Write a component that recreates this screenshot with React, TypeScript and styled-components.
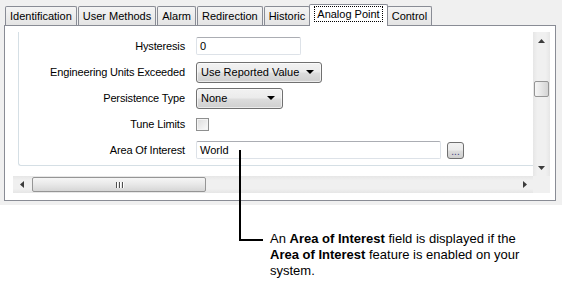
import React from "react";
import styled, { createGlobalStyle } from "styled-components";

const GlobalStyle = createGlobalStyle`
  html, body {
    margin: 0;
    padding: 0;
    background: #ffffff;
  }
  body {
    font-family: "Liberation Sans", Arial, sans-serif;
    color: #000000;
  }
`;

const TABS = ["Identification", "User Methods", "Alarm", "Redirection", "Historic", "Analog Point", "Control"];
const ACTIVE_TAB = "Analog Point";

const Page = styled.div`
  position: relative;
  width: 562px;
  height: 300px;
  overflow: hidden;
`;

const Window = styled.div`
  background: #f0f0f0;
  padding: 3px 6px 4px 4px;
`;

const TabStrip = styled.div`
  position: relative;
  z-index: 1;
  display: flex;
  align-items: flex-end;
  height: 23px;
  margin-bottom: -1px;
  padding-left: 1px;
`;

const Tab = styled.div<{ $active?: boolean }>`
  position: relative;
  box-sizing: border-box;
  display: flex;
  align-items: center;
  height: ${({ $active }) => ($active ? "22px" : "19px")};
  margin: ${({ $active }) => ($active ? "0 -1px 0 -2px" : "0 1px 1px 0")};
  padding: ${({ $active }) => ($active ? "0 5px 3px" : "0 4px")};
  border: 1px solid #898c95;
  border-bottom: none;
  border-radius: 2px 2px 0 0;
  background: ${({ $active }) => ($active ? "#ffffff" : "linear-gradient(#f4f4f4, #e4e4e4)")};
  z-index: ${({ $active }) => ($active ? 2 : 0)};
  font-size: 11px;
  white-space: nowrap;
`;

const FocusLabel = styled.span`
  padding: 1px 2px;
  outline: 1px dotted #000000;
  outline-offset: 0;
`;

const Panel = styled.div`
  box-sizing: border-box;
  height: 176px;
  border: 1px solid #898c95;
  background: #ffffff;
  padding: 6px 5px 7px 8px;
`;

const ScrollFrame = styled.div`
  display: grid;
  grid-template-columns: 1fr 17px;
  grid-template-rows: 1fr 17px;
  height: 100%;
`;

const Viewport = styled.div`
  overflow: hidden;
  padding: 0 0 9px 5px;
  background: #ffffff;
`;

const GroupBox = styled.div`
  box-sizing: border-box;
  width: 620px;
  height: 134px;
  padding: 1px 0 2px;
  border-left: 1px solid #d5dfe5;
  border-bottom: 1px solid #d5dfe5;
  border-bottom-left-radius: 3px;
  display: grid;
  grid-template-columns: 166px 1fr;
  grid-auto-rows: 26px;
  column-gap: 11px;
  align-items: center;
`;

const Label = styled.div`
  text-align: right;
  font-size: 11px;
  letter-spacing: -0.15px;
  white-space: nowrap;
`;

const FieldRow = styled.div`
  display: flex;
  align-items: center;
  gap: 6px;
`;

const TextBox = styled.div<{ $width: number }>`
  box-sizing: border-box;
  width: ${({ $width }) => $width}px;
  height: 18px;
  padding: 0 3px;
  border: 1px solid #dde2e8;
  border-top-color: #abadb3;
  border-radius: 2px;
  background: #ffffff;
  font-size: 11px;
  line-height: 16px;
`;

const Combo = styled.div<{ $width: number; $height: number }>`
  position: relative;
  box-sizing: border-box;
  width: ${({ $width }) => $width}px;
  height: ${({ $height }) => $height}px;
  padding: 0 20px 0 4px;
  border: 1px solid #707070;
  border-radius: 3px;
  background: linear-gradient(#f2f2f2 0%, #ebebeb 48%, #dddddd 52%, #cfcfcf 100%);
  box-shadow: inset 0 0 0 1px rgba(255, 255, 255, 0.6);
  display: flex;
  align-items: center;
  font-size: 11px;
`;

const ComboArrow = styled.span`
  position: absolute;
  right: 7px;
  top: 50%;
  margin-top: -2px;
  width: 0;
  height: 0;
  border-left: 4px solid transparent;
  border-right: 4px solid transparent;
  border-top: 4px solid #000000;
`;

const CheckBox = styled.div`
  box-sizing: border-box;
  width: 13px;
  height: 13px;
  border: 1px solid #8e8f8f;
  background: linear-gradient(135deg, #dcdcdc, #fbfbfb);
  box-shadow: inset 0 0 0 1px #f4f4f4;
`;

const EllipsisButton = styled.div`
  box-sizing: border-box;
  width: 17px;
  height: 17px;
  margin-top: 1px;
  border: 1px solid #707070;
  border-radius: 3px;
  background: linear-gradient(#f2f2f2 0%, #ebebeb 48%, #dddddd 52%, #cfcfcf 100%);
  display: flex;
  align-items: flex-end;
  justify-content: center;
  font-size: 10px;
  line-height: 12px;
  color: #3a3a7a;
`;

const VScroll = styled.div`
  display: flex;
  flex-direction: column;
  background: linear-gradient(to right, #e6e6e6, #f0f0f0 25%, #f0f0f0 75%, #e6e6e6);
`;

const HScroll = styled.div`
  display: flex;
  align-items: center;
  background: linear-gradient(#e6e6e6, #f0f0f0 25%, #f0f0f0 75%, #e6e6e6);
`;

const Corner = styled.div`
  background: #f0f0f0;
`;

const ArrowButton = styled.div`
  flex: none;
  width: 17px;
  height: 17px;
  display: flex;
  align-items: center;
  justify-content: center;
`;

const Track = styled.div`
  flex: 1;
  display: flex;
  min-width: 0;
  min-height: 0;
`;

const VThumb = styled.div<{ $offset: number }>`
  box-sizing: border-box;
  width: 15px;
  height: 16px;
  margin: ${({ $offset }) => $offset}px 1px 0;
  border: 1px solid #959595;
  border-radius: 2px;
  background: linear-gradient(to right, #f6f6f6, #e6e6e6 50%, #d4d4d4);
`;

const HThumb = styled.div<{ $offset: number; $length: number }>`
  box-sizing: border-box;
  width: ${({ $length }) => $length}px;
  height: 15px;
  margin-left: ${({ $offset }) => $offset}px;
  border: 1px solid #959595;
  border-radius: 2px;
  background: linear-gradient(#f6f6f6, #e8e8e8 50%, #d6d6d6);
  display: flex;
  align-items: center;
  justify-content: center;
  gap: 2px;
`;

const Grip = styled.span`
  width: 1px;
  height: 6px;
  background: #505050;
  box-shadow: 1px 0 0 #ffffff;
`;

const Callout = styled.p`
  margin: 26px 0 0 270px;
  font-size: 13px;
  line-height: 16px;
`;

const Leader = styled.svg`
  position: absolute;
  left: 238px;
  top: 150px;
  pointer-events: none;
`;

function Arrow({ dir }: { dir: "up" | "down" | "left" | "right" }) {
  const points = {
    up: "0,4 3.5,0 7,4",
    down: "0,0 7,0 3.5,4",
    left: "4,0 4,7 0,3.5",
    right: "0,0 0,7 4,3.5",
  }[dir];
  const horizontal = dir === "left" || dir === "right";
  return (
    <svg width={horizontal ? 4 : 7} height={horizontal ? 7 : 4} viewBox={horizontal ? "0 0 4 7" : "0 0 7 4"}>
      <polygon points={points} fill="#3c3c3c" />
    </svg>
  );
}

function App() {
  return (
    <Page>
      <GlobalStyle />
      <Window>
        <TabStrip>
          {TABS.map((t) =>
            t === ACTIVE_TAB ? (
              <Tab key={t} $active>
                <FocusLabel>{t}</FocusLabel>
              </Tab>
            ) : (
              <Tab key={t}>{t}</Tab>
            )
          )}
        </TabStrip>
        <Panel>
          <ScrollFrame>
            <Viewport>
              <GroupBox>
                <Label>Hysteresis</Label>
                <FieldRow>
                  <TextBox $width={105}>0</TextBox>
                </FieldRow>

                <Label>Engineering Units Exceeded</Label>
                <FieldRow>
                  <Combo $width={126} $height={21}>
                    Use Reported Value
                    <ComboArrow />
                  </Combo>
                </FieldRow>

                <Label>Persistence Type</Label>
                <FieldRow>
                  <Combo $width={87} $height={21}>
                    None
                    <ComboArrow />
                  </Combo>
                </FieldRow>

                <Label>Tune Limits</Label>
                <FieldRow>
                  <CheckBox />
                </FieldRow>

                <Label>Area Of Interest</Label>
                <FieldRow>
                  <TextBox $width={245}>World</TextBox>
                  <EllipsisButton>...</EllipsisButton>
                </FieldRow>
              </GroupBox>
            </Viewport>
            <VScroll>
              <ArrowButton>
                <Arrow dir="up" />
              </ArrowButton>
              <Track>
                <VThumb $offset={32} />
              </Track>
              <ArrowButton>
                <Arrow dir="down" />
              </ArrowButton>
            </VScroll>
            <HScroll>
              <ArrowButton>
                <Arrow dir="left" />
              </ArrowButton>
              <Track>
                <HThumb $offset={2} $length={174}>
                  <Grip />
                  <Grip />
                  <Grip />
                </HThumb>
              </Track>
              <ArrowButton>
                <Arrow dir="right" />
              </ArrowButton>
            </HScroll>
            <Corner />
          </ScrollFrame>
        </Panel>
      </Window>
      <Callout>
        An <b>Area of Interest</b> field is displayed if the
        <br />
        <b>Area of Interest</b> feature is enabled on your
        <br />
        system.
      </Callout>
      <Leader width={26} height={92} viewBox="0 0 26 92">
        <polyline points="2,0 2,90 25,90" fill="none" stroke="#000000" strokeWidth={2} />
      </Leader>
    </Page>
  );
}

export default App;
